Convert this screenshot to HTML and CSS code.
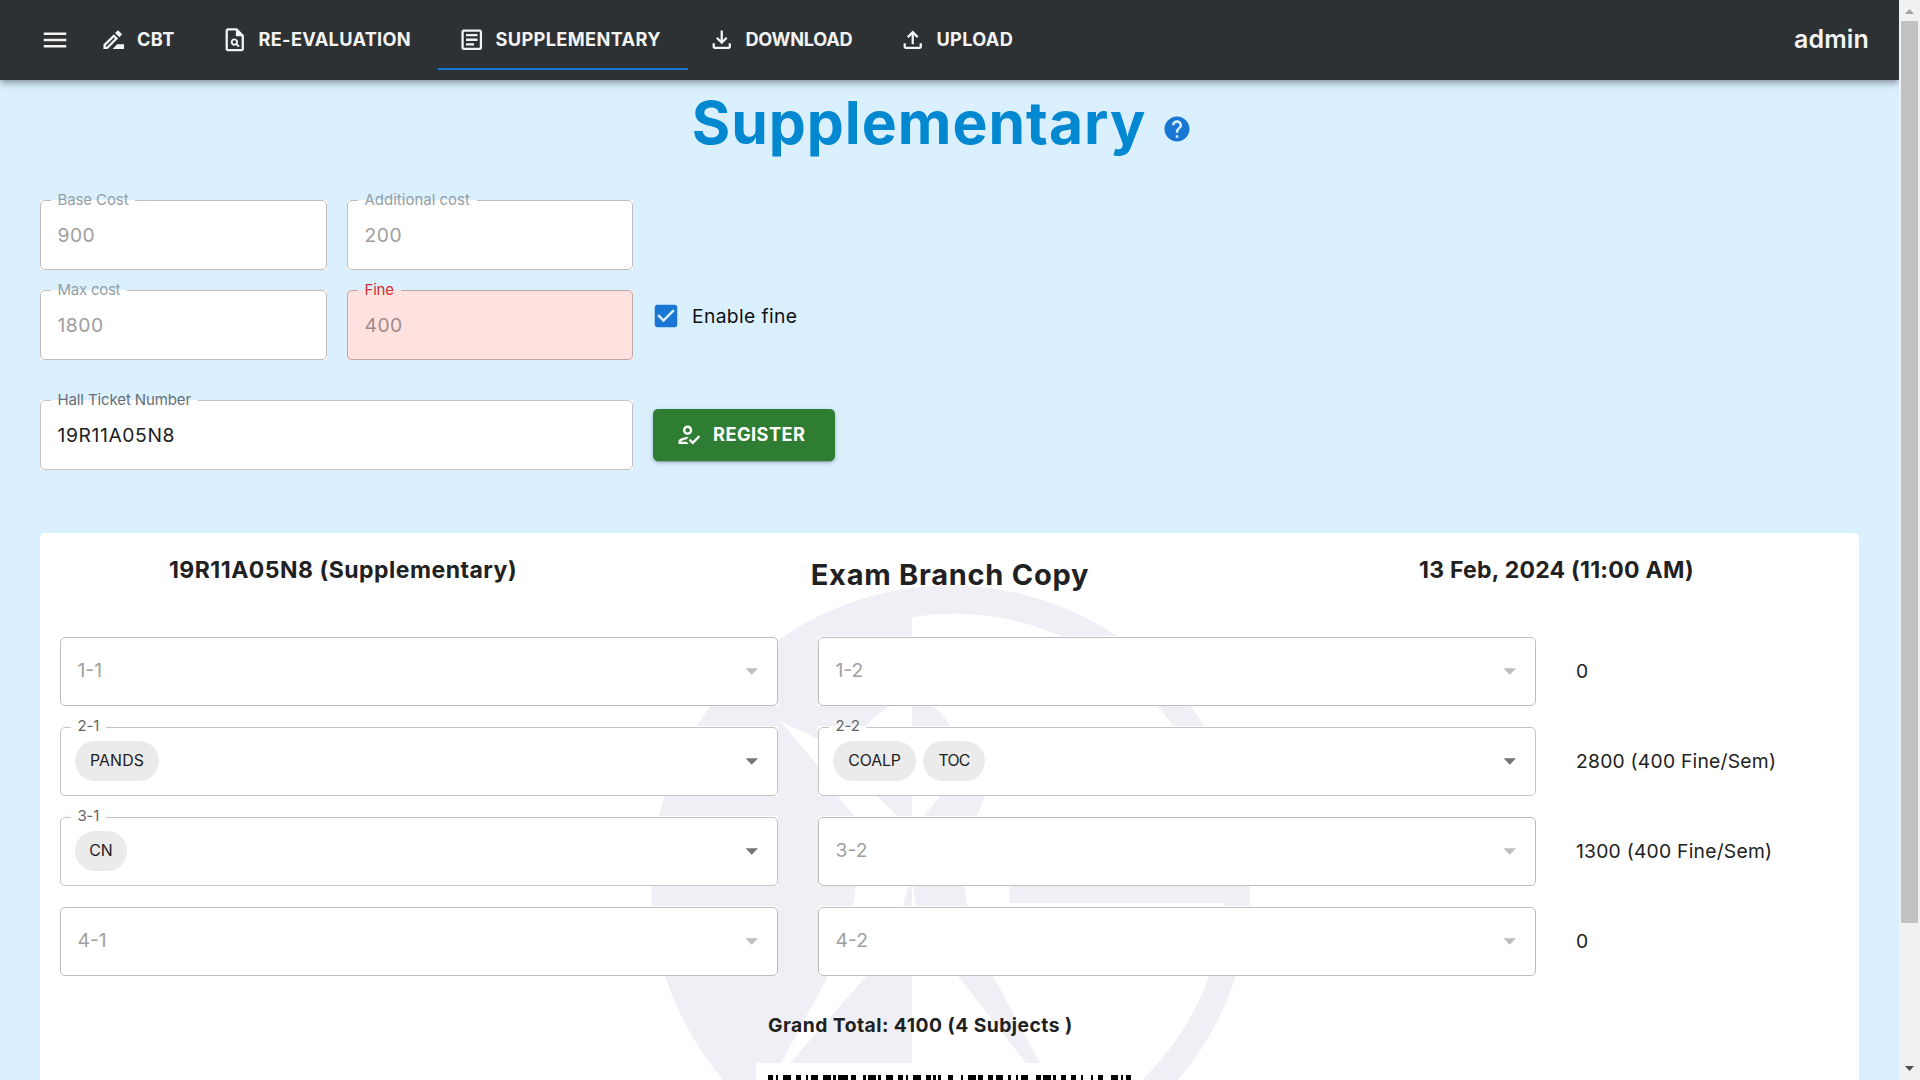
FILE: index.html
```html
<!DOCTYPE html>
<html lang="en">
<head>
<meta charset="utf-8">
<title>Supplementary</title>
<link rel="stylesheet" href="styles.css">
</head>
<body>
<div class="page">
  <header class="appbar">
    <button class="menu" aria-label="Menu"><svg class="i30" viewBox="0 0 24 24"><path d="M3 18h18v-2H3v2zm0-5h18v-2H3v2zm0-7v2h18V6H3z"/></svg></button>
    <nav class="tabs">
      <a class="tab tab-cbt"><svg class="i27" viewBox="0 0 24 24"><path d="m15 16-4 4h10v-4h-6zm-2.94-8.81L3 16.25V20h3.75l9.06-9.06-3.75-3.75zM5.92 18H5v-.92l7.06-7.06.92.92L5.92 18zm12.79-9.96c.39-.39.39-1.02 0-1.41l-2.34-2.34c-.2-.2-.45-.29-.71-.29-.25 0-.51.1-.7.29l-1.83 1.83 3.75 3.75 1.83-1.83z"/></svg><span>CBT</span></a>
      <a class="tab tab-re"><svg class="i27" viewBox="0 0 24 24"><path fill-rule="evenodd" d="M14 2H6c-1.1 0-1.99.9-1.99 2L4 20c0 1.1.89 2 1.99 2H18c1.1 0 2-.9 2-2V8l-6-6zM6 4h7v5h5v11H6V4zm5.7 6.8a3.2 3.2 0 1 0 1.55 6l1.85 1.85 1.25-1.25-1.85-1.85a3.2 3.2 0 0 0-2.8-4.75zm0 1.7a1.5 1.5 0 1 1 0 3 1.5 1.5 0 0 1 0-3z"/></svg><span>RE-EVALUATION</span></a>
      <a class="tab tab-sup active"><svg class="i27" viewBox="0 0 24 24"><path d="M19 5v14H5V5h14m0-2H5c-1.1 0-2 .9-2 2v14c0 1.1.9 2 2 2h14c1.1 0 2-.9 2-2V5c0-1.1-.9-2-2-2z"/><path d="M14 17H7v-2h7v2zm3-4H7v-2h10v2zm0-4H7V7h10v2z"/></svg><span>SUPPLEMENTARY</span></a>
      <a class="tab tab-down"><svg class="i27" viewBox="0 0 24 24"><path d="M18 15v3H6v-3H4v3c0 1.1.9 2 2 2h12c1.1 0 2-.9 2-2v-3h-2zm-1-4-1.41-1.41L13 12.17V4h-2v8.17L8.41 9.59 7 11l5 5 5-5z"/></svg><span>DOWNLOAD</span></a>
      <a class="tab tab-up"><svg class="i27" viewBox="0 0 24 24"><path d="M18 15v3H6v-3H4v3c0 1.1.9 2 2 2h12c1.1 0 2-.9 2-2v-3h-2zM7 9l1.41 1.41L11 7.83V16h2V7.83l2.59 2.58L17 9l-5-5-5 5z"/></svg><span>UPLOAD</span></a>
    </nav>
    <div class="user">admin</div>
  </header>

  <main class="main">
    <div class="title-row">
      <h1>Supplementary</h1>
      <svg class="i30 help" viewBox="0 0 24 24"><path d="M12 2C6.48 2 2 6.48 2 12s4.48 10 10 10 10-4.48 10-10S17.52 2 12 2zm1 17h-2v-2h2v2zm2.07-7.75-.9.92C13.45 12.9 13 13.5 13 15h-2v-.5c0-1.1.45-2.1 1.17-2.83l1.24-1.26c.37-.36.59-.86.59-1.41 0-1.1-.9-2-2-2s-2 .9-2 2H8c0-2.21 1.79-4 4-4s4 1.79 4 4c0 .88-.36 1.68-.93 2.25z"/></svg>
    </div>

    <form class="form">
      <div class="field disabled"><label class="l-base">Base Cost</label><div class="outline"><span class="v-num">900</span></div></div>
      <div class="field disabled"><label class="l-add">Additional cost</label><div class="outline"><span class="v-num">200</span></div></div>
      <div></div>
      <div class="field disabled"><label class="l-max">Max cost</label><div class="outline"><span class="v-num">1800</span></div></div>
      <div class="field disabled fine"><label class="l-fine">Fine</label><div class="outline"><span class="v-num">400</span></div></div>
      <div class="check"><svg class="i30" viewBox="0 0 24 24"><path d="M19 3H5c-1.11 0-2 .9-2 2v14c0 1.1.89 2 2 2h14c1.11 0 2-.9 2-2V5c0-1.1-.89-2-2-2zm-9 14-5-5 1.41-1.41L10 14.17l7.59-7.59L19 8l-9 9z"/></svg><span>Enable fine</span></div>
      <div class="field hall"><label class="l-hall">Hall Ticket Number</label><div class="outline"><span class="v-hall">19R11A05N8</span></div></div>
      <div class="action"><button type="button" class="register"><svg class="i27" viewBox="0 0 24 24"><path d="M11 12c2.21 0 4-1.79 4-4s-1.79-4-4-4-4 1.79-4 4 1.79 4 4 4zm0-6c1.1 0 2 .9 2 2s-.9 2-2 2-2-.9-2-2 .9-2 2-2zM5 18c.2-.63 2.57-1.68 4.96-1.94l2.04-2c-.39-.04-.68-.06-1-.06-2.67 0-8 1.34-8 4v2h9l-2-2H5zm15.6-5.5-5.13 5.17-2.07-2.08L12 17l3.47 3.5L22 13.91z"/></svg><span>REGISTER</span></button></div>
    </form>

    <section class="card">
      <svg class="watermark" viewBox="650 585 600 600" aria-hidden="true">
        <g class="mark">
          <path d="M912 588A299.5 299.5 0 0 0 912 1182z"/>
          <path d="M912 588A299.5 299.5 0 0 1 1231 780H1203.5A271 271 0 0 0 912 617z"/>
          <path d="M1009.5 850H1250V885A299.5 299.5 0 0 1 912 1182V1152.6A271 271 0 0 0 1224 907V903H1009.5z"/>
          <path d="M912 700L928 704Q942 710 952 730L912 750z"/>
          <path d="M940 796L924 816 911 850 913 886 916 906 958 976 1026 1063 1040 1063 993 976 967 906 964.5 886 977 816 985 796z"/>
        </g>
        <g class="cut">
          <path d="M912 700L900 703Q884 706 866 726L860 750H912z"/>
          <path d="M780 721L818 739 877 796 898 816 911 850 908 886 903 906 866.5 976 790 1063H781L828 976 853 906 856 886 854 816 838 796 818 766 789 731z"/>
        </g>
      </svg>
      <div class="card-head">
        <h3 class="h-id">19R11A05N8 (Supplementary)</h3>
        <h2>Exam Branch Copy</h2>
        <h3 class="h-date">13 Feb, 2024 (11:00 AM)</h3>
      </div>
      <div class="sems">
        <div class="sel off"><div class="outline"><span>1-1</span><i></i></div></div>
        <div class="sel off"><div class="outline"><span>1-2</span><i></i></div></div>
        <div class="cost">0</div>

        <div class="sel"><label>2-1</label><div class="outline"><div class="chips"><b class="c-pands">PANDS</b></div><i></i></div></div>
        <div class="sel"><label class="l22">2-2</label><div class="outline"><div class="chips"><b class="c-coalp">COALP</b><b class="c-toc">TOC</b></div><i></i></div></div>
        <div class="cost">2800 (400 Fine/Sem)</div>

        <div class="sel"><label>3-1</label><div class="outline"><div class="chips"><b class="c-cn">CN</b></div><i></i></div></div>
        <div class="sel off"><div class="outline"><span>3-2</span><i></i></div></div>
        <div class="cost">1300 (400 Fine/Sem)</div>

        <div class="sel off"><div class="outline"><span>4-1</span><i></i></div></div>
        <div class="sel off"><div class="outline"><span>4-2</span><i></i></div></div>
        <div class="cost">0</div>
      </div>
      <div class="total">Grand Total: 4100 (4 Subjects )</div>
      <div class="barcode">
        <svg viewBox="0 0 145 40" preserveAspectRatio="none" shape-rendering="crispEdges"><path d="M0 20H145" fill="none" stroke="#000" stroke-width="40" stroke-dasharray="2 1 1 2 3 2 2 2 1 1 3 2 3 1 1 1 4 1 2 3 1 1 3 1 1 2 3 2 2 1 1 2 3 2 2 1 1 1 1 3 2 3 1 2 3 1 2 2 2 1 3 2 1 2 1 1 3 3 2 1 3 1 1 2 2 2 2 2 1 3 1 2 2 3 3 1 1 1 2"/></svg>
      </div>
    </section>
  </main>
</div>
<div class="scrollbar"><span class="up"></span><span class="thumb"></span><span class="down"></span></div>
</body>
</html>
```
FILE: styles.css
```css
* { box-sizing: border-box; }
html, body { margin: 0; height: 100%; }
body {
  display: flex;
  height: 1080px;
  overflow: hidden;
  background: #daf0ff;
  color: #212121;
  font-family: "Inter", "Roboto", sans-serif;
  font-size: 19.3px;
}
button { border: 0; padding: 0; font: inherit; }
h1, h2, h3 { margin: 0; font-weight: 700; white-space: nowrap; }
svg { display: block; flex: none; fill: currentColor; }
.i30 { width: 30px; height: 30px; }
.i27 { width: 27.5px; height: 27.5px; }

.page { flex: 1; min-width: 0; height: 1080px; overflow: hidden; }

/* App bar */
.appbar {
  position: relative;
  display: flex;
  align-items: center;
  height: 80px;
  padding: 0 30px 0 40px;
  background: #2d3134;
  color: #f3f3f3;
  box-shadow: 0 2.5px 5px -1px rgba(0,0,0,.2), 0 5px 6px rgba(0,0,0,.14), 0 1px 12px rgba(0,0,0,.12);
}
.menu { background: none; color: inherit; width: 39.5px; }
.tabs { display: flex; }
.tab {
  display: flex;
  align-items: center;
  gap: 10px;
  height: 60px;
  padding-left: 20px;
  border-bottom: 2px solid transparent;
  border-top: 2px solid transparent;
  font-size: 18.2px;
  font-weight: 700;
  white-space: nowrap;
}
.tab span, .register span { padding-bottom: 2px; }
.tab.active { border-bottom-color: #1976d2; }
.tab-cbt { width: 121.5px; letter-spacing: .4px; }
.tab-re { width: 237px; letter-spacing: .3px; }
.tab-sup { width: 250px; letter-spacing: .35px; }
.tab-down { width: 191px; letter-spacing: -.3px; }
.tab-up { width: 161px; letter-spacing: .3px; }
.user { margin-left: auto; padding-bottom: 2px; font-size: 25px; font-weight: 600; letter-spacing: .15px; }

/* Page title */
.main { padding: 0 40px; }
.title-row {
  display: flex;
  align-items: center;
  justify-content: center;
  gap: 16px;
  height: 90px;
  padding-right: 15px;
  color: #0288d1;
}
h1 { font-size: 58.8px; letter-spacing: 1px; line-height: 86px; padding-bottom: 4px; }
.help { color: #1976d2; margin-top: 8px; }

/* Cost form */
.form {
  display: grid;
  grid-template-columns: 287px 286px 300px;
  grid-template-rows: 70px 70px 90px;
  gap: 20px;
  margin-top: 30px;
}
.hall { grid-column: 1 / 3; }
.hall, .action { margin-top: 20px; }
.field { position: relative; height: 70px; background: #fff; }
.outline {
  display: flex;
  align-items: center;
  height: 100%;
  border: 1px solid #c4c4c4;
  border-radius: 5px;
}
.field .outline { padding-left: 16.5px; }
.field label, .sel label {
  position: absolute;
  left: 11px;
  top: -10px;
  height: 20px;
  line-height: 20px;
  padding-left: 6.5px;
  font-size: 15px;
  color: #666e73;
  white-space: nowrap;
  background: linear-gradient(#fff, #fff) 0 10px / 100% 1px no-repeat;
}
.disabled .outline { border-color: #bdbdbd; color: #9e9e9e; }
.field.disabled label { color: #949ea5; }
.field.fine { background: #ffe2e0; }
.fine .outline { border-color: #bda7a6; color: #9e8c8b; }
.field.fine label { color: #d32f2f; background-image: linear-gradient(#ffe2e0, #ffe2e0); }
.v-num { letter-spacing: .5px; }
.v-hall { letter-spacing: .6px; }
.l-base { width: 84px; letter-spacing: -.1px; }
.l-add { width: 119px; }
.l-max { width: 76px; letter-spacing: -.25px; }
.l-fine { width: 43px; letter-spacing: -.2px; }
.l-hall { width: 147px; letter-spacing: -.12px; }
.check { display: flex; align-items: center; gap: 11px; height: 52px; color: #111; letter-spacing: .35px; }
.check svg { color: #1976d2; margin-left: -2px; }
.action { display: flex; align-items: center; height: 70px; }
.register {
  display: flex;
  align-items: center;
  gap: 11px;
  width: 182px;
  height: 52px;
  padding-left: 21.5px;
  border-radius: 5px;
  background: #2e7d32;
  color: #fff;
  font-size: 18.2px;
  font-weight: 700;
  letter-spacing: .45px;
  box-shadow: 0 3px 1px -2px rgba(0,0,0,.2), 0 2px 3px rgba(0,0,0,.14), 0 1px 6px rgba(0,0,0,.12);
}

/* Registration copy */
.card {
  position: relative;
  height: 700px;
  margin-top: 63px;
  padding: 0 20px;
  background: #fff;
  border-radius: 5px;
}
.watermark { position: absolute; left: 610px; top: 52px; width: 600px; height: 600px; }
.mark { fill: #f0eff6; }
.cut { fill: #fff; }
.card-head {
  position: relative;
  display: grid;
  grid-template-columns: 566px 1fr 565px;
  justify-items: center;
  height: 104px;
  padding-top: 18px;
}
h3 { font-size: 23px; line-height: 38px; }
h2 { font-size: 29px; line-height: 48px; letter-spacing: .75px; }
.h-id { letter-spacing: .5px; }
.h-date { letter-spacing: .25px; }
.sems {
  position: relative;
  display: grid;
  grid-template-columns: 718px 718px 1fr;
  grid-auto-rows: 69px;
  column-gap: 40px;
  row-gap: 21px;
}
.sel { position: relative; background: #fff; box-shadow: 0 -1px 0 #fff; }
.sel .outline { padding: 0 19px 0 16.5px; justify-content: space-between; }
.sel .outline i {
  width: 12.5px;
  height: 6.5px;
  background: #757575;
  clip-path: polygon(0 0, 100% 0, 50% 100%);
}
.off .outline { color: #a0a0a0; border-color: #bdbdbd; padding-bottom: 3px; }
.off .outline i { background: #bdbdbd; margin-top: 3px; }
.sel label { width: 35px; top: -11px; color: #666; letter-spacing: -.2px; background-position: 0 11px; }
.sel .l22 { width: 37px; }
.chips { display: flex; gap: 7px; margin-left: -2.5px; margin-bottom: 1px; }
.chips b {
  height: 40px;
  line-height: 40px;
  border-radius: 20px;
  background: #ebebeb;
  text-align: center;
  font-size: 15.8px;
  font-weight: 400;
}
.c-pands { width: 84px; letter-spacing: .15px; }
.c-coalp { width: 83px; letter-spacing: -.1px; }
.c-toc { width: 62px; letter-spacing: -.8px; }
.c-cn { width: 52px; }
.cost { align-self: center; padding-bottom: 2px; letter-spacing: .23px; white-space: nowrap; }
.total {
  position: relative;
  margin: 37px 0 0 708px;
  line-height: 24px;
  font-weight: 700;
  letter-spacing: .47px;
  white-space: nowrap;
}
.barcode {
  position: relative;
  width: 388px;
  height: 80px;
  margin: 26px auto 0;
  padding: 12px 12.5px 0;
  background: #fff;
}
.barcode svg { width: 362.5px; height: 68px; }

/* Window scrollbar */
.scrollbar {
  display: flex;
  flex-direction: column;
  align-items: center;
  width: 21px;
  height: 1080px;
  background: #f1f1f1;
}
.up, .down { width: 9px; height: 5px; }
.up { margin: 9px 0 7px; background: #a3a3a3; clip-path: polygon(50% 0, 100% 100%, 0 100%); }
.thumb { width: 17px; height: 902px; background: #c1c1c1; }
.down { margin-top: 143px; background: #505050; clip-path: polygon(0 0, 100% 0, 50% 100%); }
```
